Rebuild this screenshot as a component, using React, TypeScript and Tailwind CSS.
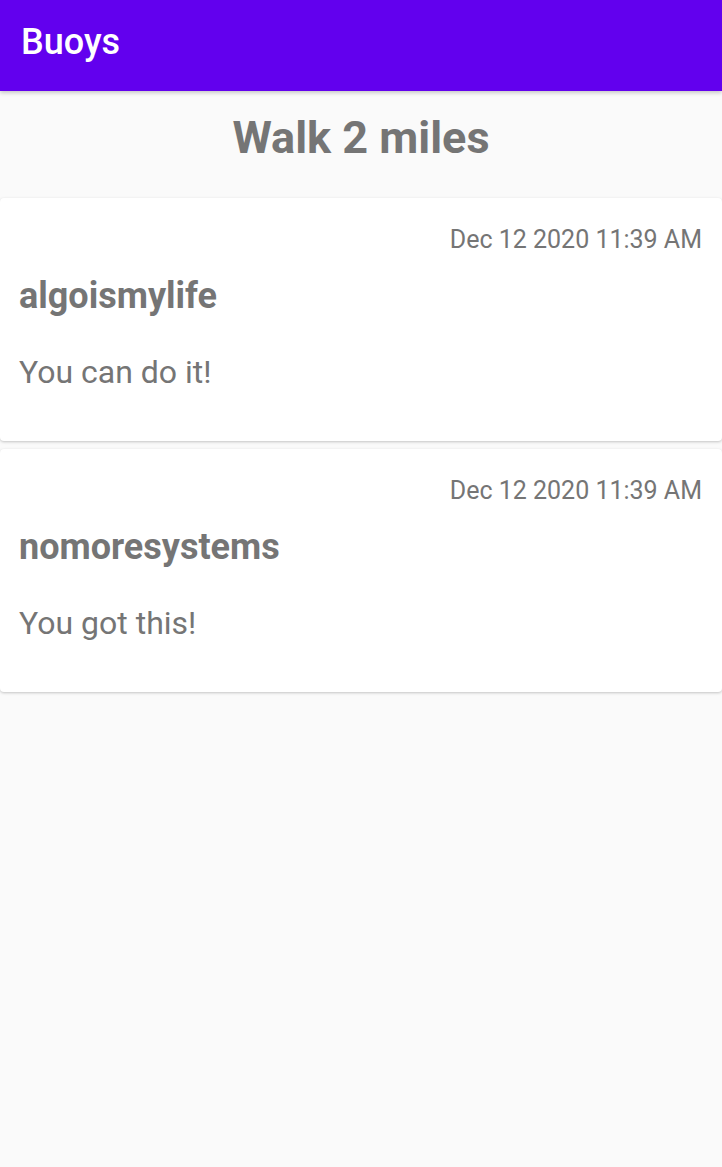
const comments = [
  { user: "algoismylife", text: "You can do it!", date: "Dec 12 2020 11:39 AM" },
  { user: "nomoresystems", text: "You got this!", date: "Dec 12 2020 11:39 AM" },
];

function CommentCard({ user, text, date }: { user: string; text: string; date: string }) {
  return (
    <div className="bg-white rounded-[4px] shadow-[0_1px_3px_rgba(0,0,0,0.22)] pt-[29px] pb-[53px] pl-[19px] pr-[20px]">
      <p className="text-right text-[25px] leading-none">{date}</p>
      <p className="mt-[26px] text-[36px] font-bold leading-none">{user}</p>
      <p className="mt-[42px] text-[32px] leading-none">{text}</p>
    </div>
  );
}

export default function App() {
  return (
    <div className="min-h-[1167px] bg-[#fafafa] text-[#757575] font-['Roboto',sans-serif]">
      <header className="h-[91px] bg-[#6200ee] pt-[24px] pl-[21px] shadow-[0_2px_4px_rgba(0,0,0,0.2)] relative">
        <h1 className="text-white text-[36px] font-medium leading-none">Buoys</h1>
      </header>

      <h2 className="pt-[24px] mb-[38px] text-center text-[45px] font-bold leading-none">Walk 2 miles</h2>

      <div className="flex flex-col gap-[8px]">
        {comments.map((c) => (
          <CommentCard key={c.user} {...c} />
        ))}
      </div>
    </div>
  );
}
